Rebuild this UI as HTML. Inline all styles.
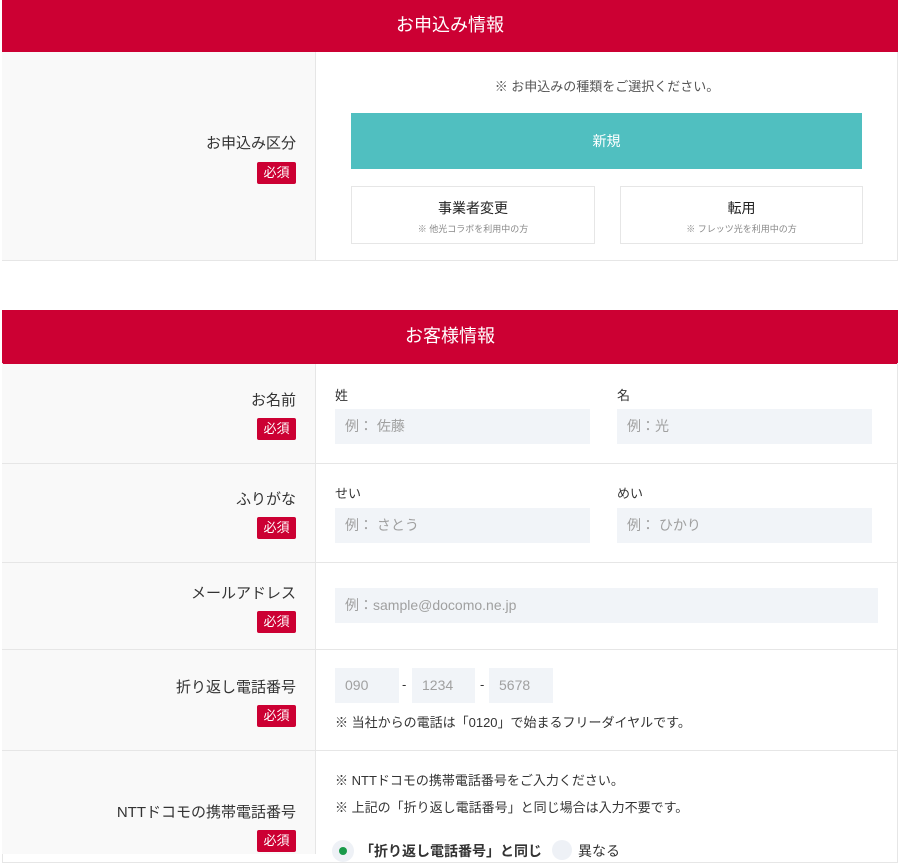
<!DOCTYPE html>
<html><head><meta charset="utf-8"><style>
*{box-sizing:border-box;margin:0;padding:0}
body{width:900px;height:854px;overflow:hidden;background:#fff;font-family:"Liberation Sans","Noto Sans CJK JP",sans-serif;color:#333;position:relative}
.a{position:absolute}
.hd{left:2px;width:896px;height:52px;background:#cc0033;color:#fff;font-size:18px;text-align:center;line-height:50px}
.lc{left:2px;width:314px;background:#f9f9f9;border-right:1px solid #e6e6e6}
.box{border:1px solid #e6e6e6}
.lbl{right:604px;font-size:15px;text-align:right;white-space:nowrap}
.req{background:#cc0033;color:#fff;font-size:13px;width:39px;height:22px;line-height:22px;text-align:center;border-radius:2px;left:257px}
.in{background:#f1f4f8;height:35px;line-height:35px;padding-left:10px;color:#a0a0a0;font-size:14px}
.sm{font-size:13px;color:#333}
.hr{left:2px;width:896px;height:1px;background:#e6e6e6}
</style></head><body>
<div class="a hd" style="top:0">お申込み情報</div>
<div class="a box" style="left:2px;top:52px;width:896px;height:209px;border-top:none"></div>
<div class="a lc" style="top:52px;height:208px"></div>
<div class="a lbl" style="top:132px">お申込み区分</div>
<div class="a req" style="top:162px">必須</div>
<div class="a sm" style="left:316px;width:582px;top:76px;text-align:center;color:#555">※ お申込みの種類をご選択ください。</div>
<div class="a" style="left:351px;top:113px;width:511px;height:56px;background:#50bfc0;color:#fff;font-size:14px;text-align:center;line-height:56px">新規</div>
<div class="a box" style="left:351px;top:186px;width:244px;height:58px;text-align:center"><div style="font-size:14px;margin-top:11px;color:#222">事業者変更</div><div style="font-size:9px;color:#888;margin-top:4px">※ 他光コラボを利用中の方</div></div>
<div class="a box" style="left:620px;top:186px;width:243px;height:58px;text-align:center"><div style="font-size:14px;margin-top:11px;color:#222">転用</div><div style="font-size:9px;color:#888;margin-top:4px">※ フレッツ光を利用中の方</div></div>

<div class="a hd" style="top:310px;height:54px;line-height:52px">お客様情報</div>
<div class="a box" style="left:2px;top:363px;width:896px;height:500px;border-top:none"></div>
<div class="a lc" style="top:364px;height:490px"></div>
<div class="a hr" style="top:463px"></div>
<div class="a hr" style="top:562px"></div>
<div class="a hr" style="top:649px"></div>
<div class="a hr" style="top:750px"></div>

<div class="a lbl" style="top:389px">お名前</div>
<div class="a req" style="top:418px">必須</div>
<div class="a sm" style="left:335px;top:385px">姓</div>
<div class="a sm" style="left:617px;top:385px">名</div>
<div class="a in" style="left:335px;top:409px;width:255px">例： 佐藤</div>
<div class="a in" style="left:617px;top:409px;width:255px">例：光</div>

<div class="a lbl" style="top:488px">ふりがな</div>
<div class="a req" style="top:517px">必須</div>
<div class="a sm" style="left:335px;top:483px">せい</div>
<div class="a sm" style="left:617px;top:483px">めい</div>
<div class="a in" style="left:335px;top:508px;width:255px">例： さとう</div>
<div class="a in" style="left:617px;top:508px;width:255px">例： ひかり</div>

<div class="a lbl" style="top:582px">メールアドレス</div>
<div class="a req" style="top:611px">必須</div>
<div class="a in" style="left:335px;top:588px;width:543px">例：sample@docomo.ne.jp</div>

<div class="a lbl" style="top:676px">折り返し電話番号</div>
<div class="a req" style="top:705px">必須</div>
<div class="a in" style="left:335px;top:668px;width:64px">090</div>
<div class="a sm" style="left:402px;top:677px">-</div>
<div class="a in" style="left:412px;top:668px;width:63px">1234</div>
<div class="a sm" style="left:480px;top:677px">-</div>
<div class="a in" style="left:489px;top:668px;width:64px">5678</div>
<div class="a sm" style="left:335px;top:712px">※ 当社からの電話は「0120」で始まるフリーダイヤルです。</div>

<div class="a lbl" style="top:801px">NTTドコモの携帯電話番号</div>
<div class="a req" style="top:830px">必須</div>
<div class="a sm" style="left:335px;top:770px">※ NTTドコモの携帯電話番号をご入力ください。</div>
<div class="a sm" style="left:335px;top:797px">※ 上記の「折り返し電話番号」と同じ場合は入力不要です。</div>
<div class="a" style="left:332px;top:840px;width:22px;height:22px;border-radius:50%;background:#eef1f6"><div style="margin:7px;width:8px;height:8px;border-radius:50%;background:#1a9a4a"></div></div>
<div class="a" style="left:360px;top:841px;font-size:14px;font-weight:bold">「折り返し電話番号」と同じ</div>
<div class="a" style="left:552px;top:840px;width:20px;height:20px;border-radius:50%;background:#eef1f6"></div>
<div class="a" style="left:578px;top:841px;font-size:14px">異なる</div>
</body></html>
